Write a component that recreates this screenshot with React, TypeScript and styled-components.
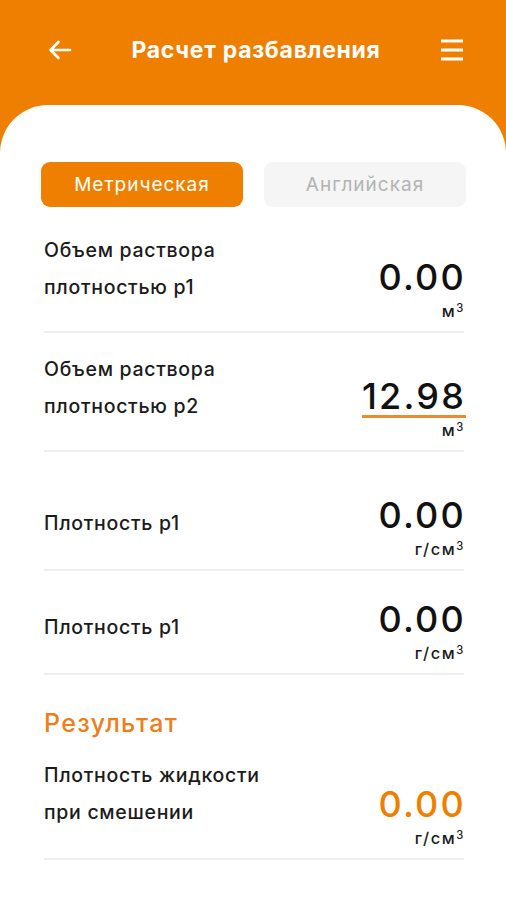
import React from "react";
import styled, { createGlobalStyle } from "styled-components";

const ORANGE = "#EF7F00";

const Global = createGlobalStyle`
  html, body { margin: 0; padding: 0; background: ${ORANGE}; }
  body { font-family: Inter, "Noto Sans", "Open Sans", sans-serif; -webkit-font-smoothing: antialiased; }
  * { box-sizing: border-box; }
`;

const Page = styled.div`
  width: 506px;
  height: 900px;
  background: ${ORANGE};
  display: flex;
  flex-direction: column;
  overflow: hidden;
`;

const Header = styled.header`
  height: 105px;
  padding: 0 42px 5px 48px;
  display: flex;
  align-items: center;
  justify-content: space-between;
  color: #fff;
`;

const Title = styled.h1`
  margin: 0;
  font-size: 23px;
  font-weight: 700;
  letter-spacing: 0.7px;
  color: #fff;
`;

const IconButton = styled.button`
  border: 0;
  background: none;
  padding: 0;
  width: 24px;
  height: 24px;
  display: flex;
  align-items: center;
  justify-content: center;
  color: #fff;
`;

const Card = styled.main`
  flex: 1;
  background: #fff;
  border-radius: 48px 48px 0 0;
  padding: 57px 42px 0 44px;
`;

const Tabs = styled.div`
  display: grid;
  grid-template-columns: 1fr 1fr;
  gap: 21px;
  margin: 0 -2px 7px -3px;
`;

const Tab = styled.button<{ $active?: boolean }>`
  height: 45px;
  border: 0;
  border-radius: 9px;
  font-family: inherit;
  font-size: 19px;
  font-weight: 400;
  letter-spacing: 1px;
  background: ${(p) => (p.$active ? ORANGE : "#f5f5f5")};
  color: ${(p) => (p.$active ? "#fff" : "#b3b3b3")};
`;

const Row = styled.div<{ $pt?: number }>`
  display: flex;
  justify-content: space-between;
  align-items: flex-start;
  padding: ${(p) => p.$pt ?? 18}px 0 11px;
  border-bottom: 2px solid #eeeeee;
`;

const Label = styled.div<{ $mt?: number }>`
  margin-top: ${(p) => p.$mt ?? 0}px;
  font-size: 19.5px;
  font-weight: 500;
  line-height: 37px;
  letter-spacing: 0.7px;
  color: #1b1b1b;
`;

const ValueCol = styled.div<{ $mt?: number }>`
  margin-top: ${(p) => p.$mt ?? 27}px;
  display: flex;
  flex-direction: column;
  align-items: flex-end;
`;

const Value = styled.div<{ $underline?: boolean; $accent?: boolean }>`
  font-size: 36px;
  font-weight: 500;
  line-height: 37px;
  letter-spacing: 2.2px;
  margin-right: -2px;
  color: ${(p) => (p.$accent ? ORANGE : "#111")};
  border-bottom: 3px solid ${(p) => (p.$underline ? "#EE8A2E" : "transparent")};
`;

const Unit = styled.div`
  margin-top: 3px;
  height: 18px;
  font-size: 16.5px;
  font-weight: 500;
  line-height: 18px;
  letter-spacing: 1.6px;
  margin-right: -1px;
  color: #1b1b1b;
`;

const Sup = styled.span`
  position: relative;
  top: -0.45em;
  font-size: 0.68em;
  line-height: 0;
  vertical-align: baseline;
`;

const SectionTitle = styled.h2`
  margin: 33px 0 0;
  font-size: 25px;
  font-weight: 500;
  line-height: 30px;
  letter-spacing: 1.3px;
  color: #ee7d1a;
`;

const BackIcon = () => (
  <svg width="24" height="20" viewBox="0 0 24 20" fill="none" stroke="#fff" strokeWidth="2.6" strokeLinecap="round" strokeLinejoin="round">
    <path d="M22 10H2.5M10.5 2L2.5 10l8 8" />
  </svg>
);

const MenuIcon = () => (
  <svg width="24" height="22" viewBox="0 0 24 22" fill="none" stroke="#fff" strokeWidth="2.8" strokeLinecap="butt">
    <path d="M1 2h22M1 11h22M1 20h22" />
  </svg>
);

type Item = {
  label: React.ReactNode;
  value: string;
  unit: React.ReactNode;
  pt?: number;
  labelMt?: number;
  valueMt?: number;
  underline?: boolean;
  accent?: boolean;
};

const M3 = <>м<Sup>3</Sup></>;
const GCM3 = <>г/см<Sup>3</Sup></>;

const inputs: Item[] = [
  { label: <>Объем раствора<br />плотностью p1</>, value: "0.00", unit: M3 },
  { label: <>Объем раствора<br />плотностью p2</>, value: "12.98", unit: M3, underline: true },
  { label: "Плотность p1", value: "0.00", unit: GCM3, labelMt: 35 },
  { label: "Плотность p1", value: "0.00", unit: GCM3, labelMt: 20, valueMt: 12 },
];

const FieldRow = ({ item }: { item: Item }) => (
  <Row $pt={item.pt}>
    <Label $mt={item.labelMt}>{item.label}</Label>
    <ValueCol $mt={item.valueMt}>
      <Value $underline={item.underline} $accent={item.accent}>{item.value}</Value>
      <Unit>{item.unit}</Unit>
    </ValueCol>
  </Row>
);

export default function App() {
  return (
    <Page>
      <Global />
      <Header>
        <IconButton aria-label="Назад"><BackIcon /></IconButton>
        <Title>Расчет разбавления</Title>
        <IconButton aria-label="Меню"><MenuIcon /></IconButton>
      </Header>
      <Card>
        <Tabs>
          <Tab $active>Метрическая</Tab>
          <Tab>Английская</Tab>
        </Tabs>
        {inputs.map((it, i) => (
          <FieldRow key={i} item={it} />
        ))}
        <SectionTitle>Результат</SectionTitle>
        <FieldRow
          item={{
            label: <>Плотность жидкости<br />при смешении</>,
            value: "0.00",
            unit: GCM3,
            pt: 19,
            valueMt: 29,
            accent: true,
          }}
        />
      </Card>
    </Page>
  );
}
